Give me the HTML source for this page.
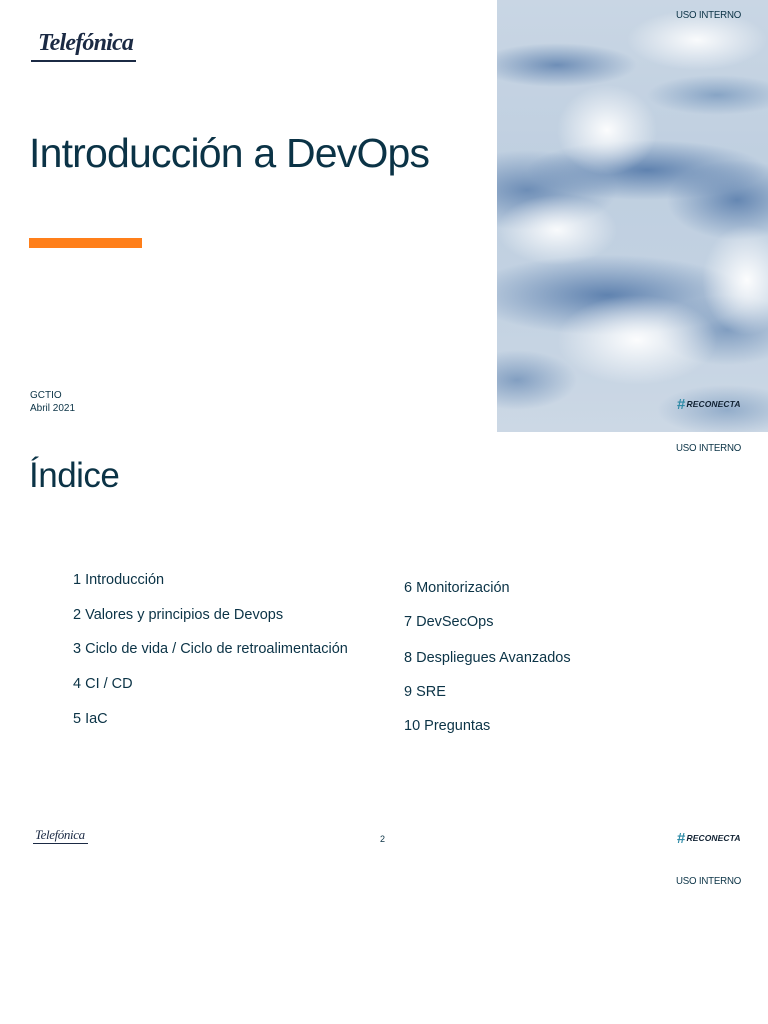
<!DOCTYPE html>
<html><head><meta charset="utf-8"><style>
html,body{margin:0;padding:0;background:#fff;}
body{width:768px;height:1024px;position:relative;overflow:hidden;font-family:"Liberation Sans",Arial,sans-serif;color:#0b3346;}
.abs{position:absolute;}
.clouds{left:497px;top:0;width:271px;height:432px;overflow:hidden;
background:
radial-gradient(ellipse 50px 45px at 110px 130px, rgba(255,255,255,.95), rgba(255,255,255,0) 100%),
radial-gradient(ellipse 45px 55px at 250px 280px, rgba(255,255,255,.95), rgba(255,255,255,0) 100%),
radial-gradient(ellipse 80px 45px at 140px 340px, rgba(255,255,255,.95), rgba(255,255,255,0) 100%),
radial-gradient(ellipse 60px 35px at 60px 230px, rgba(255,255,255,.9), rgba(255,255,255,0) 100%),
radial-gradient(ellipse 70px 30px at 200px 40px, rgba(255,255,255,.9), rgba(255,255,255,0) 100%),
radial-gradient(ellipse 80px 22px at 60px 65px, rgba(95,130,175,.85), rgba(95,130,175,0) 100%),
radial-gradient(ellipse 120px 30px at 150px 170px, rgba(85,122,170,.9), rgba(85,122,170,0) 100%),
radial-gradient(ellipse 70px 40px at 240px 200px, rgba(85,122,170,.85), rgba(85,122,170,0) 100%),
radial-gradient(ellipse 90px 40px at 30px 190px, rgba(95,130,175,.85), rgba(95,130,175,0) 100%),
radial-gradient(ellipse 140px 40px at 110px 295px, rgba(85,122,170,.9), rgba(85,122,170,0) 100%),
radial-gradient(ellipse 70px 35px at 230px 330px, rgba(100,135,178,.7), rgba(100,135,178,0) 100%),
radial-gradient(ellipse 60px 30px at 20px 380px, rgba(100,135,178,.7), rgba(100,135,178,0) 100%),
radial-gradient(ellipse 70px 25px at 230px 410px, rgba(110,145,185,.6), rgba(110,145,185,0) 100%),
radial-gradient(ellipse 70px 20px at 220px 95px, rgba(110,145,185,.7), rgba(110,145,185,0) 100%),
linear-gradient(180deg,#c9d6e4 0%,#bfcfe0 40%,#c3d2e2 70%,#ccd8e5 100%);}
.uso{font-size:9.7px;color:#0b3346;letter-spacing:-.2px;}
.title{left:29px;top:130px;font-size:41px;letter-spacing:-.8px;color:#0b3346;}
.bar{left:29px;top:238px;width:113px;height:10px;background:#ff7f1a;}
.item{font-size:14.5px;color:#0b3346;}
.logo{font-family:"Liberation Serif",serif;font-style:italic;color:#1b2a44;}
.rec{font-size:8.5px;font-weight:bold;font-style:italic;color:#123;letter-spacing:.1px;}
.rec b{color:#2e8aa6;font-style:normal;font-size:15px;vertical-align:-2px;margin-right:1px;}
</style></head><body>
<div class="abs clouds"></div>
<div class="abs uso" style="left:676px;top:10px">USO INTERNO</div>
<div class="abs logo" style="left:38px;top:30px;font-size:24px;letter-spacing:-.8px;font-weight:600">Telefónica</div>
<div class="abs" style="left:31px;top:60px;width:105px;height:1.5px;background:#1b2a44"></div>
<div class="abs title">Introducción a DevOps</div>
<div class="abs bar"></div>
<div class="abs" style="left:30px;top:389px;font-size:10px;line-height:13px">GCTIO<br>Abril 2021</div>
<div class="abs rec" style="left:677px;top:396px"><b>#</b>RECONECTA</div>

<div class="abs uso" style="left:676px;top:443px">USO INTERNO</div>
<div class="abs" style="left:29px;top:456px;font-size:35px;letter-spacing:-.5px">Índice</div>

<div class="abs item" style="left:73px;top:572px">1 Introducción</div>
<div class="abs item" style="left:73px;top:607px">2 Valores y principios de Devops</div>
<div class="abs item" style="left:73px;top:641px">3 Ciclo de vida / Ciclo de retroalimentación</div>
<div class="abs item" style="left:73px;top:676px">4 CI / CD</div>
<div class="abs item" style="left:73px;top:711px">5 IaC</div>
<div class="abs item" style="left:404px;top:580px">6 Monitorización</div>
<div class="abs item" style="left:404px;top:614px">7 DevSecOps</div>
<div class="abs item" style="left:404px;top:650px">8 Despliegues Avanzados</div>
<div class="abs item" style="left:404px;top:684px">9 SRE</div>
<div class="abs item" style="left:404px;top:718px">10 Preguntas</div>

<div class="abs logo" style="left:35px;top:827px;font-size:13px;letter-spacing:-.4px">Telefónica</div>
<div class="abs" style="left:33px;top:843px;width:55px;height:1px;background:#1b2a44"></div>
<div class="abs" style="left:380px;top:834px;font-size:9px">2</div>
<div class="abs rec" style="left:677px;top:830px"><b>#</b>RECONECTA</div>
<div class="abs uso" style="left:676px;top:876px">USO INTERNO</div>
</body></html>
